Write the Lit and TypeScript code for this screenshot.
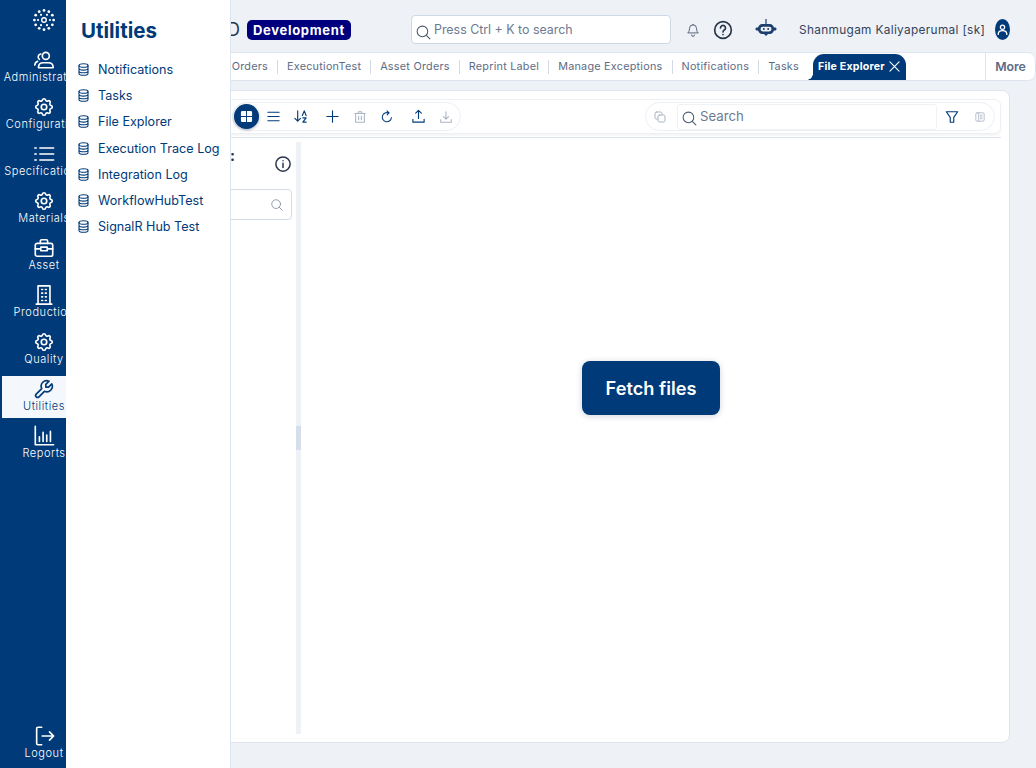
import { LitElement, html, css, svg } from 'lit';
import { customElement } from 'lit/decorators.js';

const gear = svg`<path d="M10.300 4.300c.4-1.800 3-1.800 3.400 0a1.700 1.700 0 0 0 2.600 1.100c1.500-.9 3.300.8 2.300 2.400a1.700 1.700 0 0 0 1.100 2.500c1.800.4 1.800 3 0 3.400a1.700 1.700 0 0 0-1.100 2.600c.9 1.500-.8 3.300-2.400 2.300a1.700 1.700 0 0 0-2.500 1.100c-.4 1.800-3 1.800-3.400 0a1.700 1.700 0 0 0-2.600-1.100c-1.500.9-3.300-.8-2.300-2.400a1.700 1.700 0 0 0-1.100-2.500c-1.800-.4-1.800-3 0-3.400a1.700 1.700 0 0 0 1.100-2.600c-.9-1.500.8-3.300 2.400-2.300 1 .6 2.300.1 2.500-1z"/><circle cx="12" cy="12" r="3"/>`;

const railIcons = {
  users: svg`<circle cx="14" cy="7.500" r="3.800"/><path d="M6 20.500v-1a5 5 0 0 1 5-4.500h6a5 5 0 0 1 5 4.500v1zM8.500 5.500a3.200 3.200 0 0 0-1.500 5.800M2 17.500a4.500 4.500 0 0 1 3-4"/>`,
  gear,
  list: svg`<path d="M7.500 5.500h15M7.500 12h15M7.500 18.500h15M2 5.500h1.500M2 12h1.500M2 18.500h1.500"/>`,
  case: svg`<rect x="2.500" y="7" width="19" height="14" rx="2"/><path d="M8 7V4.500A1.500 1.500 0 0 1 9.500 3h5A1.500 1.500 0 0 1 16 4.500V7M2.500 13h6M15.500 13h6M8.500 11h7v4h-7z"/>`,
  building: svg`<path d="M5.500 22V2h13v20M3.500 22h17M9.500 6h1M13.500 6h1M9.500 10h1M13.500 10h1M9.500 14h1M13.500 14h1M9.500 18h1M13.500 18h1"/>`,
  wrench: svg`<path d="M7 10h3V7L6.500 3.500a6 6 0 0 1 8 8l6 6a2 2 0 0 1-3 3l-6-6a6 6 0 0 1-8-8L7 10z" transform="matrix(-1 0 0 1 24 0)"/>`,
  chart: svg`<path d="M2.500 1.500v20h20M7 18v-5M11 18V8M15 18v-7M19 18V7"/>`,
  logout: svg`<path d="M9.500 2.500H5.500A1.500 1.500 0 0 0 4 4v16a1.500 1.500 0 0 0 1.500 1.500h4M10 12h12.500M18 7.500l4.500 4.500-4.500 4.500"/>`,
};

const railItems: [keyof typeof railIcons, string, boolean?][] = [
  ['users', 'Administration'],
  ['gear', 'Configuration'],
  ['list', 'Specifications'],
  ['gear', 'Materials'],
  ['case', 'Asset'],
  ['building', 'Production'],
  ['gear', 'Quality'],
  ['wrench', 'Utilities', true],
  ['chart', 'Reports'],
];

const menu = ['Notifications', 'Tasks', 'File Explorer', 'Execution Trace Log', 'Integration Log', 'WorkflowHubTest', 'SignalR Hub Test'];
const tabs = ['Production Orders', 'ExecutionTest', 'Asset Orders', 'Reprint Label', 'Manage Exceptions', 'Notifications', 'Tasks'];

const searchIcon = svg`<circle cx="10.500" cy="10.500" r="7.500"/><path d="m16 16 5 5"/>`;

// hub logo at the top of the rail: dots on two rings round a hollow centre
const logoDots = () => {
  const dots = [];
  for (let i = 0; i < 12; i++) {
    const a = (i * Math.PI) / 6;
    dots.push(svg`<circle cx=${12 + 10.500 * Math.sin(a)} cy=${12 - 10.500 * Math.cos(a)} r="1.500" fill="#fff" stroke="none"/>`);
  }
  for (let i = 0; i < 6; i++) {
    const a = (i * Math.PI) / 3 + Math.PI / 6;
    dots.push(svg`<circle cx=${12 + 6.500 * Math.sin(a)} cy=${12 - 6.500 * Math.cos(a)} r="1.200" fill="#fff" stroke="none"/>`);
  }
  return dots;
};

@customElement('app-root')
export class AppRoot extends LitElement {
  static styles = css`
    :host {
      display: block;
      width: 1036px;
      height: 768px;
      overflow: hidden;
      font-family: Inter, 'Open Sans', sans-serif;
      --navy: #003a78;
      --page: #eef1f6;
      --line: #dfe5ee;
      --muted: #5d6c85;
    }
    svg { fill: none; stroke: currentColor; stroke-width: 1.500; stroke-linecap: round; stroke-linejoin: round; display: block; flex: none; }

    .shell { position: relative; display: flex; height: 768px; background: var(--page); }

    /* ── Rail ──────────────────────────────────────────────── */
    .rail { width: 88px; flex: none; background: var(--navy); display: flex; flex-direction: column; color: #fff; padding-bottom: 3px; box-sizing: border-box; }
    .logo { height: 47px; display: flex; justify-content: center; padding-top: 9px; box-sizing: border-box; }
    .rail-list { display: flex; flex-direction: column; gap: 5px; }
    .rail-item { height: 42px; margin-left: 2px; width: 84px; display: flex; flex-direction: column; align-items: center; color: #fff; white-space: nowrap; font-size: 11px; font-weight: 300; letter-spacing: 0.55px; line-height: 14px; }
    .rail-item svg { margin: 2px 0 -1px; stroke-width: 1.800; }
    .rail-item.active { background: #f4f7fb; color: var(--navy); }
    .rail-item.bottom { margin-top: auto; }

    /* ── Flyout ────────────────────────────────────────────── */
    .flyout { position: absolute; left: 66px; top: 0; bottom: 0; width: 165px; box-sizing: border-box; background: #fff; border-right: 1px solid var(--line); color: var(--navy); padding: 18px 0 0 12px; }
    .flyout h2 { margin: 0 0 12px 3px; font-size: 20.500px; line-height: 26px; font-weight: 700; }
    .fly-item { height: 26.300px; display: flex; align-items: center; gap: 9px; font-size: 12.600px; white-space: nowrap; }

    /* ── Header ────────────────────────────────────────────── */
    .main { flex: 1; min-width: 0; display: flex; flex-direction: column; }
    .header { height: 52px; flex: none; box-sizing: border-box; padding-top: 7px; display: flex; align-items: center; color: #33435c; }
    .brand { margin-left: 130px; width: 22px; text-align: right; font-size: 18px; color: #28364c; }
    .badge { margin-left: 7px; height: 20px; width: 104px; display: flex; align-items: center; justify-content: center; border-radius: 5px; background: #00007f; color: #fff; font-size: 13px; font-weight: 700; letter-spacing: 0.7px; }
    .global-search { margin-left: 60px; width: 260px; height: 29px; box-sizing: border-box; background: #fff; border: 1px solid #cfd8e5; border-radius: 4px; display: flex; align-items: center; gap: 2px; padding: 0 3px; font-size: 12.400px; color: #6c7a90; }
    .global-search svg { margin-top: 5px; color: #4c5a70; }
    .global-search span { margin-top: -1px; }
    .bell { margin-left: 15px; color: #46546a; }
    .help { margin-left: 13px; color: #28364c; }
    .bot { margin-left: 22px; color: #1d3f6e; }
    .user { margin-left: 22px; width: 185px; font-size: 11.800px; letter-spacing: 0.35px; white-space: nowrap; color: #33435c; }
    .avatar { margin-left: 11px; width: 15px; height: 21px; border-radius: 50%; background: var(--navy); color: #fff; display: flex; align-items: center; justify-content: center; }

    /* ── Tabs ──────────────────────────────────────────────── */
    .tabbar { height: 29px; flex: none; box-sizing: border-box; display: flex; background: #fff; border: 1px solid var(--line); border-width: 1px 0 1px 0; border-radius: 0 8px 8px 0; overflow: hidden; }
    .tabs { width: 897px; flex: none; display: flex; justify-content: flex-end; align-items: stretch; overflow: hidden; }
    .tab { flex: none; display: flex; align-items: center; padding-bottom: 1px; font-size: 10.800px; letter-spacing: 0.25px; color: var(--muted); white-space: nowrap; }
    .sep { flex: none; width: 1px; height: 14px; margin: auto 9px; background: #d3dae4; }
    .tab.current { position: relative; width: 93px; box-sizing: border-box; margin: 1px 79px 0 14px; padding-left: 5px; gap: 4px; background: var(--navy); color: #fff; font-weight: 700; border-radius: 11px 11px 0 0; font-size: 10.600px; letter-spacing: 0.2px; }
    .tab.current::before { content: ''; position: absolute; left: -6px; bottom: 0; width: 6px; height: 6px; background: radial-gradient(circle at 0 0, transparent 5.500px, var(--navy) 6px); }
    .more { flex: 1; border-left: 1px solid var(--line); border-right: 1px solid var(--line); border-radius: 0 8px 8px 0; display: flex; align-items: center; justify-content: center; font-size: 12.300px; font-weight: 600; color: var(--muted); }

    /* ── Card ──────────────────────────────────────────────── */
    .body { flex: 1; min-height: 0; padding: 9px 26px 25px 8px; }
    .card { height: 100%; box-sizing: border-box; background: #fff; border: 1px solid var(--line); border-radius: 8px; padding: 8px; display: flex; flex-direction: column; }
    .toolbar { height: 35px; flex: none; box-sizing: border-box; border: 1px solid #eceff4; border-radius: 6px; display: flex; justify-content: space-between; align-items: center; padding: 0 5px 0 126px; box-shadow: 0 2px 3px rgba(30, 50, 80, 0.05); }
    .pill { height: 29px; box-sizing: border-box; border: 1px solid #eceff4; border-radius: 15px; display: flex; align-items: center; color: var(--navy); background: #fff; }
    .pill.left { width: 229px; padding-left: 1px; }
    .pill.right { width: 350px; padding-left: 8px; }
    .view { width: 25px; height: 25px; margin-right: 1px; border-radius: 50%; background: var(--navy); color: #fff; display: flex; align-items: center; justify-content: center; box-shadow: 0 1px 3px rgba(0, 30, 70, 0.35); }
    .tool { width: 27px; display: flex; justify-content: center; }
    .tool svg { stroke-width: 1.200; }
    .tool.off { color: #a9b3c2; }
    .tool.sort { margin-right: 5px; }
    .tool.up { margin-left: 5px; }
    .copy { color: #a9b3c2; }
    .copy svg { stroke-width: 1; }
    .find { margin-left: 11px; width: 260px; height: 26px; box-sizing: border-box; border: 1px solid #f0f2f6; border-radius: 3px; display: flex; align-items: center; gap: 2px; padding: 0 3px; font-size: 13.200px; color: #6c7a90; }
    .find svg { margin-top: 4px; color: #4c5a70; }
    .find span { margin-top: -1px; }
    .filter { margin-left: 8px; stroke-width: 1.300; }
    .panel-toggle { margin-left: 16px; color: #a9b3c2; stroke-width: 1; }
    .rule { height: 1px; flex: none; margin-top: 3px; background: var(--line); }

    .split { flex: 1; min-height: 0; display: flex; margin-top: 4px; }
    .tree { width: 191px; flex: none; box-sizing: border-box; padding: 0 4px 0 0; }
    .tree-head { display: flex; align-items: center; justify-content: space-between; height: 44px; }
    .tree-head b { margin-left: 125px; font-size: 15px; color: #28364c; margin-top: -17px; }
    .tree-head svg { color: #28364c; }
    .tree-find { margin-top: 3px; height: 31px; box-sizing: border-box; border: 1px solid #d5dce7; border-radius: 4px; display: flex; align-items: center; justify-content: flex-end; padding-right: 7px; color: #8491a5; }
    .splitter { width: 5px; flex: none; background: #eef1f6; display: flex; align-items: center; }
    .splitter i { display: block; width: 5px; height: 24px; background: #d5deea; }
    .pane { flex: 1; display: flex; align-items: center; justify-content: center; padding-bottom: 101px; }
    .fetch { width: 138px; height: 54px; border: 0; border-radius: 8px; background: var(--navy); color: #fff; font: 600 18.200px Inter, sans-serif; box-shadow: 0 1px 6px rgba(0, 30, 70, 0.2); }
  `;

  private _rail(icon: keyof typeof railIcons, label: string, active = false, extra = '') {
    return html`<div class="rail-item ${active ? 'active' : ''} ${extra}">
      <svg width="22" height="22" viewBox="0 0 24 24">${railIcons[icon]}</svg>${label}
    </div>`;
  }

  render() {
    return html`
      <div class="shell">
        <nav class="rail">
          <div class="logo"><svg width="22" height="22" viewBox="0 0 24 24">${logoDots()}<circle cx="12" cy="12" r="2.500" /></svg></div>
          <div class="rail-list">${railItems.map(([i, l, a]) => this._rail(i, l, a))}</div>
          ${this._rail('logout', 'Logout', false, 'bottom')}
        </nav>

        <div class="main">
          <header class="header">
            <span class="brand">D</span>
            <span class="badge">Development</span>
            <div class="global-search">
              <svg width="17" height="17" viewBox="0 0 24 24">${searchIcon}</svg><span>Press Ctrl + K to search</span>
            </div>
            <svg class="bell" width="14" height="14" viewBox="0 0 24 24"><path d="M12 3a6 6 0 0 1 6 6c0 5 2 7 3 8H3c1-1 3-3 3-8a6 6 0 0 1 6-6zM9.500 20.500a2.500 2.500 0 0 0 5 0"/></svg>
            <svg class="help" width="20" height="20" viewBox="0 0 24 24" style="stroke-width:2"><circle cx="12" cy="12" r="10"/><path d="M9 9.500a3 3 0 1 1 4.500 2.600c-1 .6-1.500 1.200-1.500 2.400M12 17.500v.2"/></svg>
            <svg class="bot" width="22" height="21" viewBox="0 0 22 21" style="stroke:none;fill:currentColor"><rect x="10.400" y="0" width="1.200" height="6"/><path d="M7 5h8c2 0 3 1.500 4 3.500h1.500c1.300 0 1.300 3 0 3H19c-1 2-2 3.500-4 3.500h-2l-2 2-2-2H7c-2 0-3-1.500-4-3.500H1.500c-1.300 0-1.300-3 0-3H3C4 6.500 5 5 7 5z"/><rect x="5.500" y="7.800" width="11" height="4.600" rx="2.300" fill="#eef1f6"/><circle cx="8.800" cy="10.100" r="1" /><circle cx="13.200" cy="10.100" r="1" /></svg>
            <span class="user">Shanmugam Kaliyaperumal [sk]</span>
            <span class="avatar"><svg width="13" height="13" viewBox="0 0 24 24" style="stroke-width:2.400"><circle cx="12" cy="8" r="4"/><path d="M4 21c0-5 3-7 8-7s8 2 8 7"/></svg></span>
          </header>

          <div class="tabbar">
            <div class="tabs">
              ${tabs.map((t, i) => html`${i ? html`<span class="sep"></span>` : ''}<span class="tab">${t}</span>`)}
              <span class="tab current">File Explorer
                <svg width="11" height="11" viewBox="0 0 12 12" style="stroke-width:1.200"><path d="m1 1 10 10M11 1 1 11"/></svg>
              </span>
            </div>
            <div class="more">More</div>
          </div>

          <div class="body">
            <section class="card">
              <div class="toolbar">
                <div class="pill left">
                  <span class="view"><svg width="13" height="13" viewBox="0 0 14 14" style="fill:currentColor;stroke:none"><path d="M1 2.500A1.500 1.500 0 0 1 2.500 1h4v5.500H1zM7.500 1h4A1.500 1.500 0 0 1 13 2.500v4H7.500zM1 7.500h5.500V13h-4A1.500 1.500 0 0 1 1 11.500zM7.500 7.500H13v4a1.500 1.500 0 0 1-1.500 1.500h-4z"/></svg></span>
                  <span class="tool"><svg width="15" height="15" viewBox="0 0 16 16"><path d="M2 3.500h12M2 8h12M2 12.500h12"/></svg></span>
                  <span class="tool sort"><svg width="15" height="15" viewBox="0 0 16 16"><path d="M5 2v11M2 10l3 3 3-3M10 7l2-5 2 5M10.500 9.500H14L10.500 14H14"/></svg></span>
                  <span class="tool"><svg width="15" height="15" viewBox="0 0 16 16"><path d="M8 2v12M2 8h12"/></svg></span>
                  <span class="tool off"><svg width="14" height="14" viewBox="0 0 16 16"><path d="M2 4h12M6 4V2h4v2M3 4v10h10V4M6.500 7v4M9.500 7v4"/></svg></span>
                  <span class="tool"><svg width="14" height="14" viewBox="0 0 16 16"><path d="M13 8.500a5.200 5.200 0 1 1-3-5M8 1l2.400 2.400L8.200 5.600"/></svg></span>
                  <span class="tool up"><svg width="15" height="15" viewBox="0 0 16 16"><path d="M8 10V2M5 4.500 8 1.500l3 3M2 11v3h12v-3"/></svg></span>
                  <span class="tool off"><svg width="14" height="14" viewBox="0 0 16 16"><path d="M8 2v8M5 7.500 8 10.500l3-3M2 11v3h12v-3"/></svg></span>
                </div>
                <div class="pill right">
                  <span class="copy"><svg width="12" height="12" viewBox="0 0 12 12"><rect x="1" y="1" width="7" height="7" rx="1.500"/><rect x="4" y="4" width="7" height="7" rx="1.500" fill="#fff"/></svg></span>
                  <div class="find"><svg width="17" height="17" viewBox="0 0 24 24">${searchIcon}</svg><span>Search</span></div>
                  <svg class="filter" width="14" height="14" viewBox="0 0 16 16"><path d="M1.500 2h13L10 8.500V14H6V8.500z"/></svg>
                  <svg class="panel-toggle" width="10" height="10" viewBox="0 0 12 12"><rect x="1" y="1" width="10" height="10" rx="1.500"/><path d="M4.500 1v10M6.500 4h2M6.500 6h2M6.500 8h2"/></svg>
                </div>
              </div>
              <div class="rule"></div>
              <div class="split">
                <aside class="tree">
                  <div class="tree-head">
                    <b>:</b>
                    <svg width="18" height="18" viewBox="0 0 24 24" style="stroke-width:2"><circle cx="12" cy="12" r="9.500"/><path d="M12 11v5.500M12 7.500v.2"/></svg>
                  </div>
                  <div class="tree-find"><svg width="14" height="14" viewBox="0 0 24 24">${searchIcon}</svg></div>
                </aside>
                <div class="splitter"><i></i></div>
                <div class="pane"><button class="fetch">Fetch files</button></div>
              </div>
            </section>
          </div>
        </div>

        <aside class="flyout">
          <h2>Utilities</h2>
          ${menu.map(
            (m) => html`<div class="fly-item">
              <svg width="11" height="13" viewBox="0 0 11 13" style="stroke-width:1.100"><ellipse cx="5.500" cy="2.500" rx="4.500" ry="1.800"/><path d="M1 2.500v8c0 1 2 1.800 4.500 1.800s4.500-.8 4.500-1.800v-8M1 5.300c0 1 2 1.800 4.500 1.800S10 6.300 10 5.300M1 8c0 1 2 1.800 4.500 1.800S10 9 10 8"/></svg>
              ${m}
            </div>`
          )}
        </aside>
      </div>
    `;
  }
}

declare global {
  interface HTMLElementTagNameMap {
    'app-root': AppRoot;
  }
}
